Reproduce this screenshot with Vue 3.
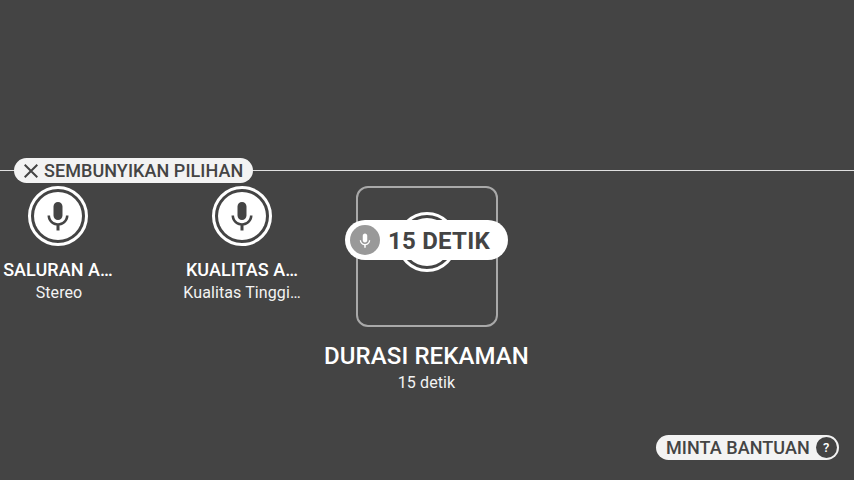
<script setup>
const mic = 'M12 14c1.66 0 2.99-1.34 2.99-3L15 5c0-1.66-1.34-3-3-3S9 3.34 9 5v6c0 1.66 1.34 3 3 3zm5.3-3c0 3-2.54 5.1-5.3 5.1S6.7 14 6.7 11H5c0 3.41 2.72 6.23 6 6.72V21h2v-3.28c3.28-.48 6-3.3 6-6.72h-1.7z'
const options = [
  { title: 'SALURAN A…', value: 'Stereo' },
  { title: 'KUALITAS A…', value: 'Kualitas Tinggi…' },
  { title: 'DURASI REKAMAN', value: '15 detik', active: true }
]
</script>

<template>
  <main class="screen">
    <header class="divider">
      <button class="pill hide">
        <svg class="close" viewBox="0 0 14 14"><path d="M.7 .7l12.6 12.6M13.3 .7L.7 13.3" /></svg>
        <span>SEMBUNYIKAN PILIHAN</span>
      </button>
    </header>
    <section class="options">
      <article v-for="o in options" :key="o.title" class="option" :class="{ active: o.active }">
        <div class="frame">
          <div class="ring">
            <div class="disc"><svg viewBox="0 0 24 24"><path :d="mic" /></svg></div>
          </div>
          <div v-if="o.active" class="toast">
            <span class="badge"><svg viewBox="0 0 24 24"><path :d="mic" /></svg></span>
            <span class="label">15 DETIK</span>
          </div>
        </div>
        <h2>{{ o.title }}</h2>
        <p>{{ o.value }}</p>
      </article>
    </section>
    <footer>
      <button class="pill help"><span>MINTA BANTUAN</span><i>?</i></button>
    </footer>
  </main>
</template>

<style>
body { margin: 0; background: #444; }
</style>

<style scoped>
.screen {
  width: 854px;
  height: 480px;
  box-sizing: border-box;
  padding-top: 158px;
  display: flex;
  flex-direction: column;
  overflow: hidden;
  background: #444;
  color: #fff;
  font-family: Roboto, sans-serif;
}
.divider {
  height: 25px;
  flex: none;
  padding-left: 14px;
  background: linear-gradient(#e0e0e0, #e0e0e0) 0 12px / 100% 1px no-repeat;
}
.pill {
  display: flex;
  align-items: center;
  box-sizing: border-box;
  height: 25px;
  border: 0;
  border-radius: 13px;
  background: #f3f3f3;
  color: #444;
  font: 500 18px/25px Roboto, sans-serif;
  letter-spacing: 0.06px;
  white-space: nowrap;
}
.hide { width: 239px; padding: 0 0 0 10px; gap: 6px; }
.close { width: 14px; height: 14px; flex: none; fill: none; stroke: #444; stroke-width: 2; }
.options {
  display: grid;
  grid-template-columns: 116px 252px 118px;
  width: 486px;
  margin-top: 3px;
  height: 249px;
  flex: none;
}
.option { display: flex; flex-direction: column; align-items: center; white-space: nowrap; }
.frame { position: relative; display: flex; justify-content: center; flex: none; }
.ring {
  width: 60px;
  height: 60px;
  box-sizing: border-box;
  border: 3px solid #fff;
  padding: 3px;
  border-radius: 50%;
}
.disc { width: 48px; height: 48px; border-radius: 50%; background: #fff; display: flex; align-items: center; justify-content: center; }
.disc svg { width: 36px; height: 36px; fill: #444; margin-top: 1px; }
h2 { margin: 13px 0 0; font-weight: 500; font-size: 18px; line-height: 22px; letter-spacing: 0.06px; }
p { margin: 2px 0 0; font-size: 16px; line-height: 20px; letter-spacing: 0.1px; color: #f3f3f3; }
.option:first-child p { padding-left: 2px; }
.active .frame {
  width: 142px;
  height: 141px;
  box-sizing: border-box;
  border: 2px solid #a9a9a9;
  border-radius: 12px;
  padding-top: 24px;
}
.active h2 { margin-top: 15px; padding-right: 1px; font-size: 24px; line-height: 28px; letter-spacing: 0.1px; }
.active p { margin-top: 3px; padding-right: 1px; }
.toast {
  position: absolute;
  left: -13px;
  top: 32px;
  width: 163px;
  height: 40px;
  box-sizing: border-box;
  padding-left: 5px;
  border-radius: 20px;
  background: #fff;
  color: #444;
  display: flex;
  align-items: center;
  gap: 8px;
}
.badge { width: 30px; height: 30px; flex: none; border-radius: 50%; background: #999; display: flex; align-items: center; justify-content: center; }
.badge svg { width: 18px; height: 18px; fill: #fff; margin-top: 1px; }
.label { font-weight: 700; font-size: 24px; line-height: 40px; padding-top: 2px; letter-spacing: 0.25px; }
footer { display: flex; justify-content: flex-end; padding-right: 15px; }
.help { width: 183px; padding: 0 0 0 10px; gap: 6px; }
.help i { width: 21px; height: 21px; flex: none; border-radius: 50%; background: #444; color: #fff; font: 500 13px/22px Roboto, sans-serif; text-align: center; }
</style>
